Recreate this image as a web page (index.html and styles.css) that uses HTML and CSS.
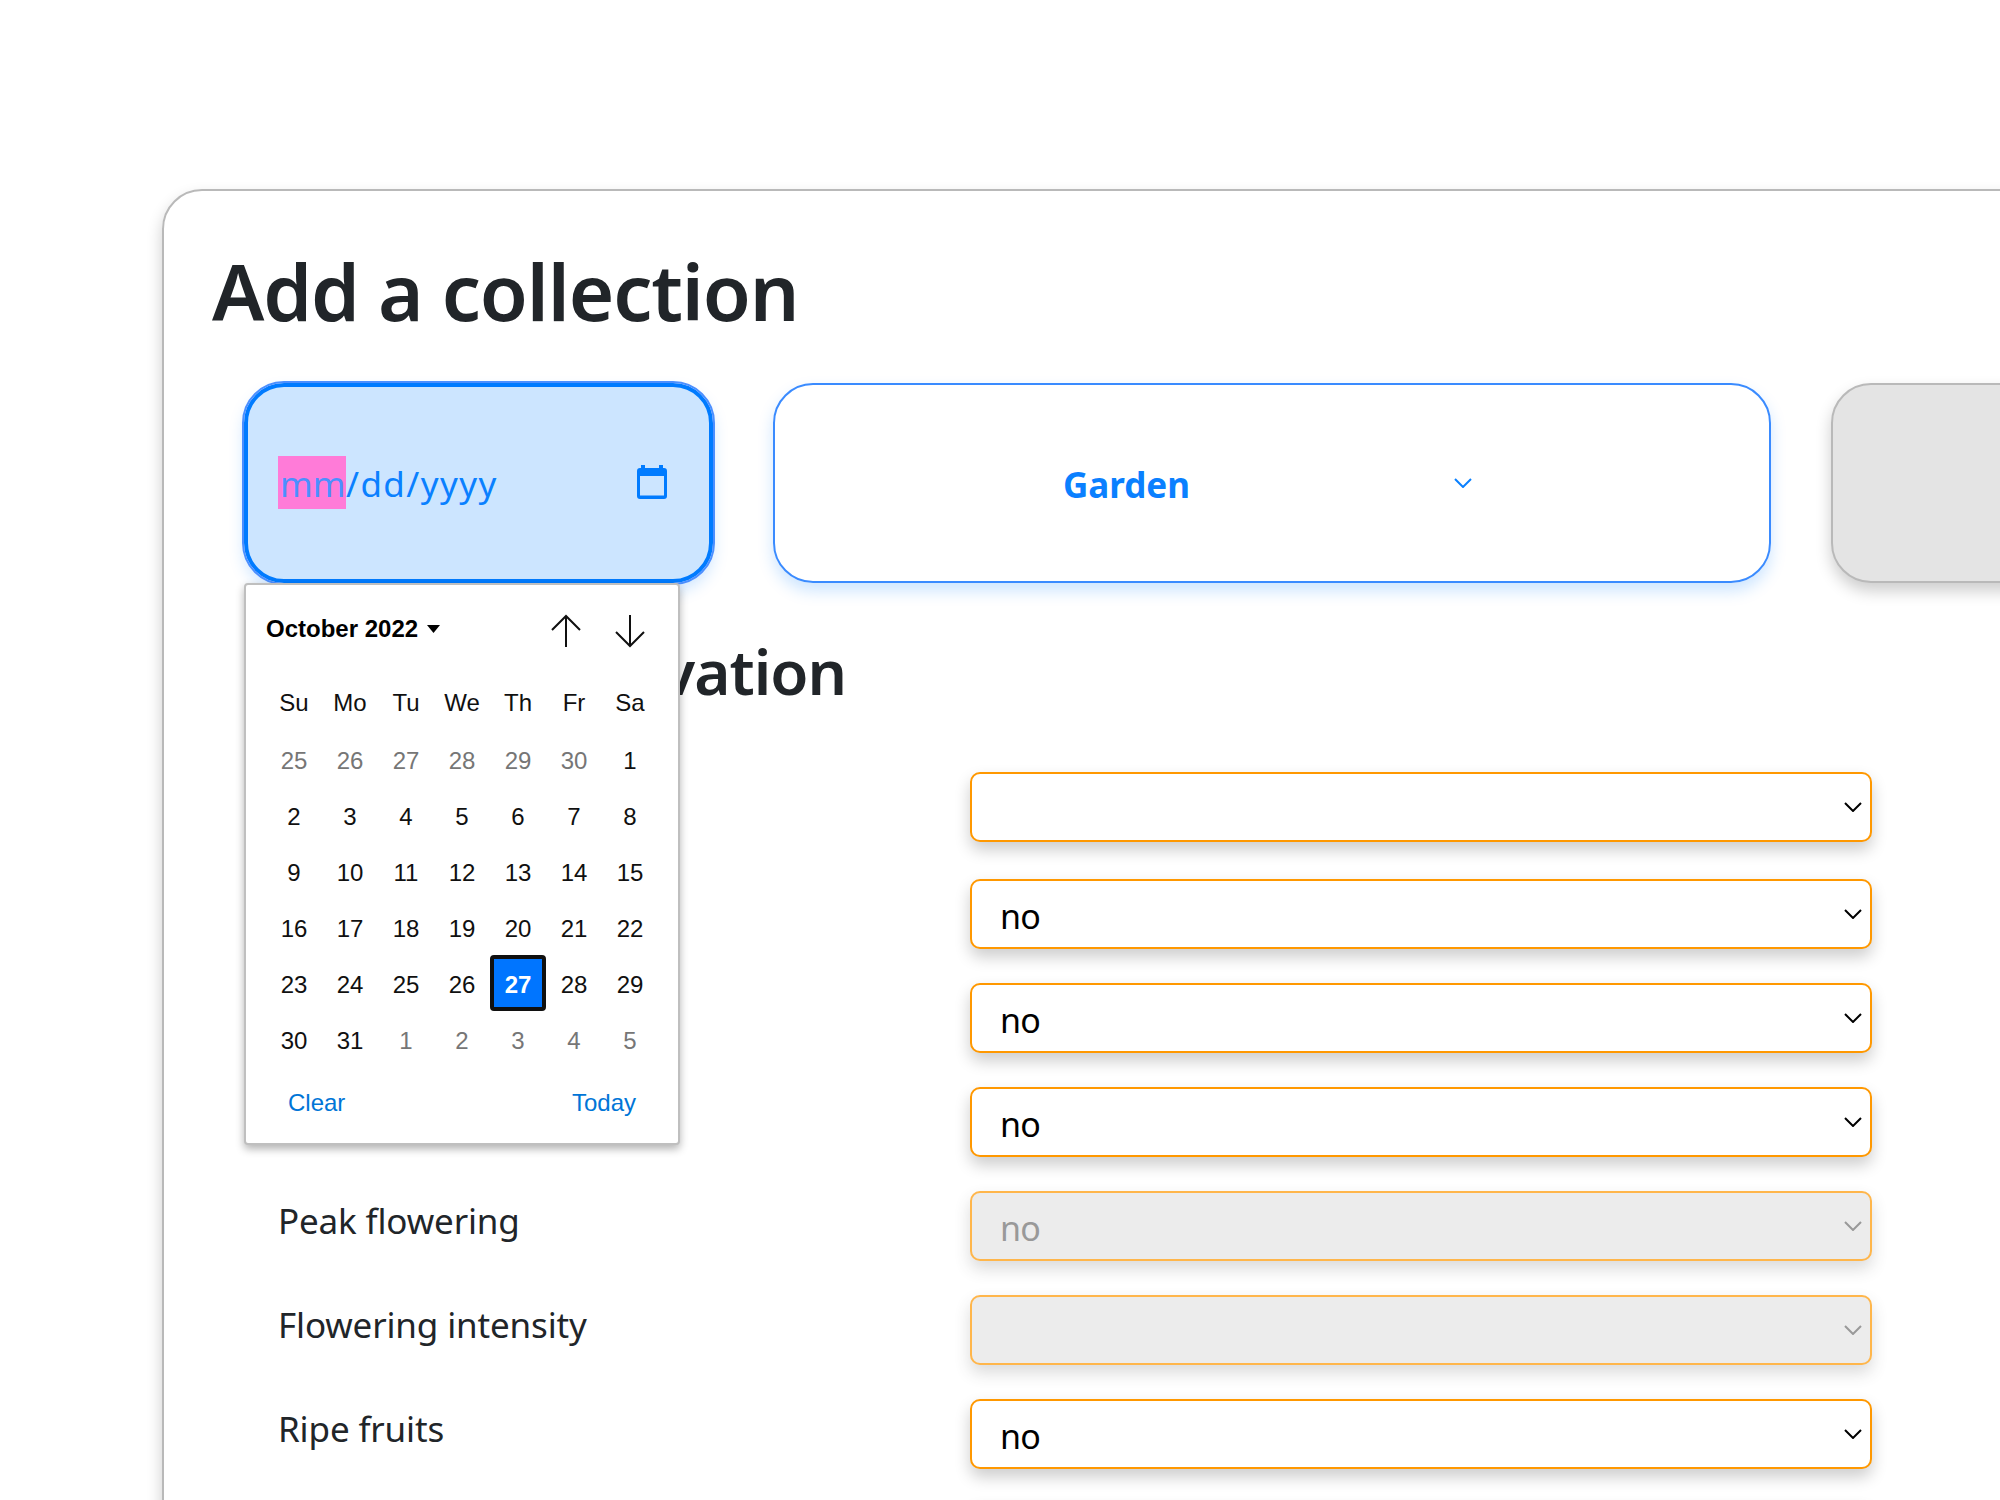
FILE: index.html
```html
<!DOCTYPE html>
<html lang="en">
<head>
<meta charset="utf-8">
<title>Add a collection</title>
<link rel="stylesheet" href="styles.css">
</head>
<body>
<svg width="0" height="0" class="defs">
  <symbol id="chevron" viewBox="0 0 18 10"><path d="M1 1L9 9L17 1" fill="none" stroke="currentColor" stroke-width="2"/></symbol>
</svg>
<main class="card">
  <h1><span>Add a collection</span></h1>
  <div class="pickers">
    <div class="date-field">
      <span class="date-text"><span class="segment"><span>mm</span></span><span class="rest">/dd/yyyy</span></span>
      <svg class="date-icon" width="30" height="34" viewBox="0 0 30 34"><path fill="currentColor" fill-rule="evenodd" d="M4 0h4v3h14V0h4v3h1a3 3 0 0 1 3 3v25a3 3 0 0 1-3 3H3a3 3 0 0 1-3-3V6a3 3 0 0 1 3-3h1zM3 11v19.500h24V11z"/></svg>
      <div class="calendar">
        <div class="cal-head">
          <span class="month">October 2022</span>
          <svg class="caret" width="13" height="8" viewBox="0 0 13 8"><path d="M0 0H13L6.5 8Z"/></svg>
          <svg class="arrow" width="30" height="34" viewBox="0 0 30 34"><path d="M15 33V2M1 16L15 2L29 16"/></svg>
          <svg class="arrow" width="30" height="34" viewBox="0 0 30 34"><path d="M15 1V32M1 18L15 32L29 18"/></svg>
        </div>
        <div class="days names"><span>Su</span><span>Mo</span><span>Tu</span><span>We</span><span>Th</span><span>Fr</span><span>Sa</span></div>
        <div class="days">
          <span class="out">25</span><span class="out">26</span><span class="out">27</span><span class="out">28</span><span class="out">29</span><span class="out">30</span><span>1</span>
          <span>2</span><span>3</span><span>4</span><span>5</span><span>6</span><span>7</span><span>8</span>
          <span>9</span><span>10</span><span>11</span><span>12</span><span>13</span><span>14</span><span>15</span>
          <span>16</span><span>17</span><span>18</span><span>19</span><span>20</span><span>21</span><span>22</span>
          <span>23</span><span>24</span><span>25</span><span>26</span><span class="today">27</span><span>28</span><span>29</span>
          <span>30</span><span>31</span><span class="out">1</span><span class="out">2</span><span class="out">3</span><span class="out">4</span><span class="out">5</span>
        </div>
        <div class="cal-foot"><span>Clear</span><span>Today</span></div>
      </div>
    </div>
    <div class="garden"><span>Garden</span><svg width="18" height="10"><use href="#chevron"/></svg></div>
    <div class="disabled-box"></div>
  </div>
  <h2>Observation</h2>
  <div class="rows">
    <div class="row first"><label></label><div class="select"><span></span><svg width="18" height="10"><use href="#chevron"/></svg></div></div>
    <div class="row"><label></label><div class="select"><span>no</span><svg width="18" height="10"><use href="#chevron"/></svg></div></div>
    <div class="row"><label></label><div class="select"><span>no</span><svg width="18" height="10"><use href="#chevron"/></svg></div></div>
    <div class="row"><label></label><div class="select"><span>no</span><svg width="18" height="10"><use href="#chevron"/></svg></div></div>
    <div class="row"><label>Peak flowering</label><div class="select off"><span>no</span><svg width="18" height="10"><use href="#chevron"/></svg></div></div>
    <div class="row"><label>Flowering intensity</label><div class="select off"><span></span><svg width="18" height="10"><use href="#chevron"/></svg></div></div>
    <div class="row"><label>Ripe fruits</label><div class="select"><span>no</span><svg width="18" height="10"><use href="#chevron"/></svg></div></div>
    <div class="row"><label></label><div class="select"><span></span></div></div>
  </div>
</main>
</body>
</html>
```
FILE: styles.css
```css
* { box-sizing: border-box; }
html, body { height: 1500px; overflow: hidden; }
body { margin: 0; padding: 189px 0 0 162px; background: #fff; color: #212529; font-family: "Noto Sans", "Open Sans", sans-serif; }
.defs { display: block; height: 0; }
.card { width: 2200px; height: 1500px; padding: 52px 0 0 48px; border: 2px solid #b9b9b9; border-radius: 40px; box-shadow: 0 8px 16px rgba(0,0,0,.2); }
h1 { margin: 0 0 44px; font-size: 78px; line-height: 96px; font-weight: 600; letter-spacing: -1.1px; white-space: nowrap; }
.pickers { display: grid; grid-template-columns: 469px 998px 500px; column-gap: 60px; height: 200px; padding-left: 32px; }
.date-field { position: relative; display: flex; align-items: center; justify-content: space-between; padding: 0 42px 0 30px; border: 4px solid #007bff; border-radius: 40px; outline: 2px solid #4c8fff; background: #cce5ff; color: #0a80ff; box-shadow: 0 8px 16px rgba(0,123,255,.2); }
.date-text { display: flex; font-size: 35px; line-height: 53px; }
.segment { width: 68px; height: 53px; padding: 1px 0 0 2px; background: #ff7bd8; color: #4c8fff; }
.segment span { display: block; }
.rest { padding-top: 1px; letter-spacing: 1.4px; }
.date-icon { margin-bottom: 2px; color: #007bff; }
.garden { display: flex; align-items: center; padding-left: 288px; border: 2px solid #3a8bff; border-radius: 40px; color: #0a80ff; font-size: 35px; font-weight: 700; box-shadow: 0 8px 16px rgba(0,123,255,.2); }
.garden span { width: 391px; line-height: 56px; padding-top: 3px; }
.disabled-box { border: 2px solid #b9b9b9; border-radius: 40px; background: #e4e4e4; box-shadow: 0 8px 16px rgba(0,0,0,.2); }
h2 { width: 634px; margin: 48px 0 61px; font-size: 62px; line-height: 80px; font-weight: 600; letter-spacing: -1px; text-align: right; }
.rows { padding-left: 66px; }
.row { display: grid; grid-template-columns: 692px 902px; height: 104px; font-size: 35px; }
.first { height: 107px; }
label { padding-top: 1px; line-height: 58px; letter-spacing: -.15px; }
.select { display: flex; align-items: center; justify-content: space-between; height: 70px; padding: 0 8px 0 28px; border: 2px solid #ff9800; border-radius: 10px; background: #fff; color: #000; font-size: 34px; box-shadow: 0 8px 16px rgba(0,0,0,.2); }
.select span { padding-top: 3px; letter-spacing: -.8px; }
.off { background: #e4e4e4; opacity: .7; color: #6e6e6e; }
.calendar { position: absolute; z-index: 2; left: -4px; top: 196px; width: 436px; height: 562px; padding: 0 20px; border: 2px solid #bfbfbf; border-radius: 4px; background: #fff; color: #000; font: 24px/56px "Liberation Sans", Arial, sans-serif; box-shadow: 0 4px 8px rgba(0,0,0,.3); }
.cal-head { display: flex; align-items: center; height: 90px; }
.month { flex: none; width: 161px; padding-bottom: 2px; font-weight: 700; white-space: nowrap; }
.caret { flex: none; margin: 0 111px 2px 0; }
.arrow { flex: none; margin-top: 1px; fill: none; stroke: #101010; stroke-width: 2; }
.arrow + .arrow { margin-left: 34px; }
.days { display: grid; grid-template-columns: repeat(7, 56px); text-align: center; color: #101010; }
.names { height: 58px; }
.out { color: #767676; }
.today { margin-top: -2px; height: 56px; border: 4px solid #101010; border-radius: 4px; background: #0075ff; color: #fff; font-weight: 700; line-height: 52px; }
.cal-foot { display: flex; justify-content: space-between; padding: 6px 22px 0 22px; color: #0075d7; }
```
